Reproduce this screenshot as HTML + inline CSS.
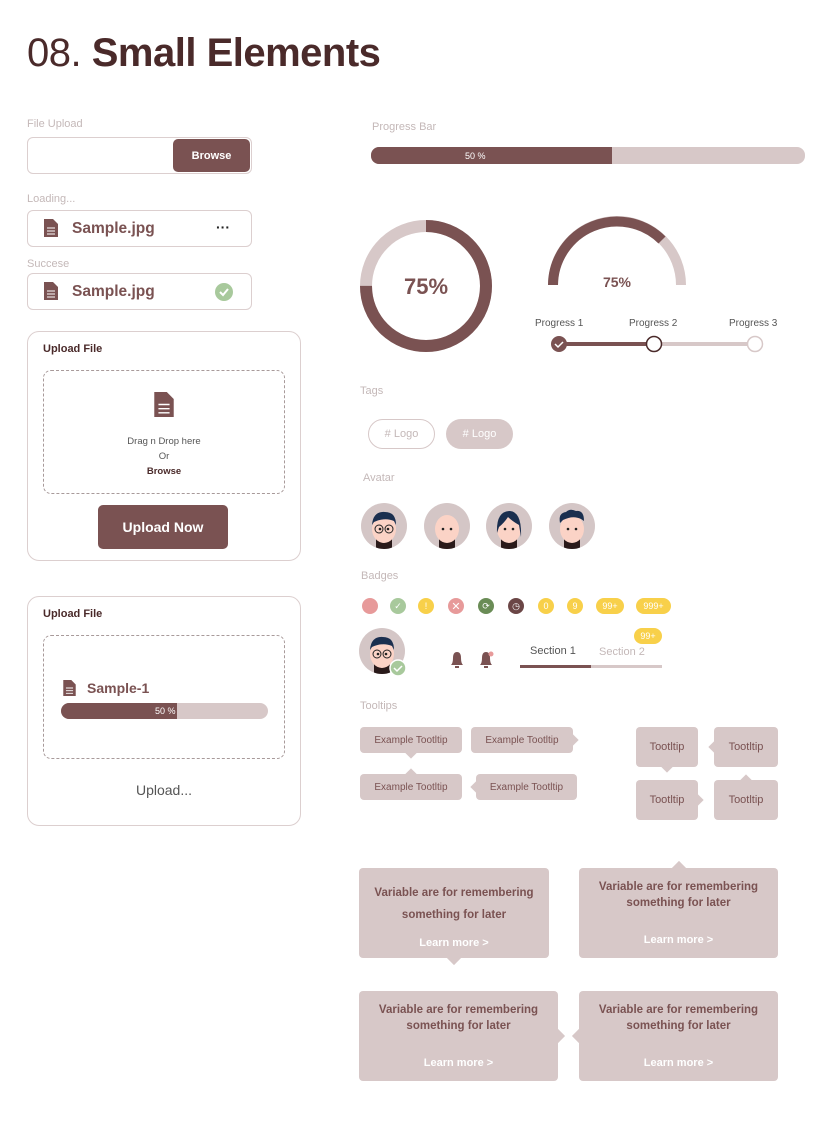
<!DOCTYPE html>
<html><head><meta charset="utf-8"><style>
*{box-sizing:border-box;margin:0;padding:0}
body{width:830px;height:1128px;background:#fff;font-family:"Liberation Sans",sans-serif;position:relative;overflow:hidden;color:#7a5252}
.a{position:absolute}
.lbl{position:absolute;font-size:11px;color:#c4b8b8}
.box{position:absolute;border:1.5px solid #dccfcf;border-radius:6px;background:#fff}
.fname{position:absolute;font-size:15.5px;font-weight:bold;color:#7a5252}
.card{position:absolute;border:1.5px solid #dccfcf;border-radius:12px}
.dash{position:absolute;border:1.2px dashed #a89a9a;border-radius:8px}
.tt{position:absolute;background:#d7c8c8;border-radius:4px;font-size:10px;color:#7a5252;display:flex;align-items:center;justify-content:center}
.tt i{position:absolute;width:8px;height:8px;background:#d7c8c8;transform:rotate(45deg)}
.big{position:absolute;background:#d7c8c8;border-radius:4px;color:#7a5252;font-size:11.5px;font-weight:bold;text-align:center;line-height:16px}
.big i{position:absolute;width:10px;height:10px;background:#d7c8c8;transform:rotate(45deg)}
.big b{position:absolute;left:0;right:0;color:#fff;font-size:11px}
.bd{position:absolute;top:598px;width:16px;height:16px;border-radius:8px;color:#fff;font-size:9px;display:flex;align-items:center;justify-content:center}
.pill{position:absolute;height:16px;border-radius:8px;background:#f8d04a;color:#fff;font-size:9px;display:flex;align-items:center;justify-content:center}
.av{position:absolute;width:46px;height:46px;border-radius:23px;background:#d4c6c6;overflow:hidden}
</style></head><body>
<div class="a" style="left:27px;top:31px;font-size:40px;color:#4a2a2a;letter-spacing:-0.5px"><span>08.</span> <b>Small Elements</b></div>

<div class="lbl" style="left:27px;top:118px">File Upload</div>
<div class="box" style="left:27px;top:137px;width:225px;height:37px"></div>
<div class="a" style="left:173px;top:139px;width:77px;height:33px;background:#7a5252;border-radius:5px;color:#fff;font-size:11px;font-weight:bold;display:flex;align-items:center;justify-content:center">Browse</div>

<div class="lbl" style="left:27px;top:193px">Loading...</div>
<div class="box" style="left:27px;top:210px;width:225px;height:37px"></div>
<svg class="a" style="left:44px;top:219px" width="14" height="18" viewBox="0 0 14 18"><path d="M0 0h9l5 5v13H0z" fill="#7a5252"/><path d="M3 9h8M3 12h8M3 15h8" stroke="#fff" stroke-width="1"/></svg>
<div class="fname" style="left:72px;top:220px">Sample.jpg</div>
<div class="a" style="left:216px;top:219px;font-size:14px;font-weight:bold;color:#222">···</div>

<div class="lbl" style="left:27px;top:258px">Succese</div>
<div class="box" style="left:27px;top:273px;width:225px;height:37px"></div>
<svg class="a" style="left:44px;top:282px" width="14" height="18" viewBox="0 0 14 18"><path d="M0 0h9l5 5v13H0z" fill="#7a5252"/><path d="M3 9h8M3 12h8M3 15h8" stroke="#fff" stroke-width="1"/></svg>
<div class="fname" style="left:72px;top:283px">Sample.jpg</div>
<svg class="a" style="left:215px;top:283px" width="18" height="18"><circle cx="9" cy="9" r="9" fill="#a8c99c"/><path d="M5 9l3 3 5-6" stroke="#fff" stroke-width="2" fill="none"/></svg>

<div class="card" style="left:27px;top:331px;width:274px;height:230px"></div>
<div class="a" style="left:43px;top:343px;font-size:11px;font-weight:bold;color:#4a2a2a">Upload File</div>
<div class="dash" style="left:43px;top:370px;width:242px;height:124px"></div>
<svg class="a" style="left:154px;top:392px" width="20" height="25" viewBox="0 0 14 18"><path d="M0 0h9l5 5v13H0z" fill="#7a5252"/><path d="M3 9h8M3 12h8M3 15h8" stroke="#fff" stroke-width="1"/></svg>
<div class="a" style="left:43px;width:242px;top:434px;text-align:center;font-size:9.5px;color:#555;line-height:15px">Drag n Drop here<br>Or<br><b style="color:#4a2a2a">Browse</b></div>
<div class="a" style="left:98px;top:505px;width:130px;height:44px;background:#7a5252;border-radius:5px;color:#fff;font-size:14px;font-weight:bold;display:flex;align-items:center;justify-content:center">Upload Now</div>

<div class="card" style="left:27px;top:596px;width:274px;height:230px"></div>
<div class="a" style="left:43px;top:608px;font-size:11px;font-weight:bold;color:#4a2a2a">Upload File</div>
<div class="dash" style="left:43px;top:635px;width:242px;height:124px"></div>
<svg class="a" style="left:63px;top:680px" width="13" height="16" viewBox="0 0 14 18"><path d="M0 0h9l5 5v13H0z" fill="#7a5252"/><path d="M3 9h8M3 12h8M3 15h8" stroke="#fff" stroke-width="1"/></svg>
<div class="fname" style="left:87px;top:680px;font-size:14px">Sample-1</div>
<div class="a" style="left:61px;top:703px;width:207px;height:16px;border-radius:8px;background:#d7c8c8;overflow:hidden"><div style="width:116px;height:16px;background:#7a5252"></div></div>
<div class="a" style="left:155px;top:706px;font-size:9px;color:#fff">50 %</div>
<div class="a" style="left:43px;width:242px;top:782px;text-align:center;font-size:14px;color:#555">Upload...</div>

<div class="lbl" style="left:372px;top:121px">Progress Bar</div>
<div class="a" style="left:371px;top:147px;width:434px;height:17px;border-radius:8px;background:#d7c8c8;overflow:hidden"><div style="width:241px;height:17px;background:#7a5252"></div></div>
<div class="a" style="left:465px;top:151px;font-size:9px;color:#fff">50 %</div>

<svg class="a" style="left:356px;top:216px" width="140" height="140">
<circle cx="70" cy="70" r="60" fill="none" stroke="#d7c8c8" stroke-width="12"/>
<circle cx="70" cy="70" r="60" fill="none" stroke="#7a5252" stroke-width="12" stroke-dasharray="282.7 377" transform="rotate(-90 70 70)"/>
<text x="70" y="78" text-anchor="middle" font-size="22" font-weight="bold" fill="#7a5252" font-family="Liberation Sans">75%</text></svg>
<svg class="a" style="left:547px;top:215px" width="140" height="75">
<path d="M6 70A64 64 0 0 1 134 70" fill="none" stroke="#d7c8c8" stroke-width="10"/>
<path d="M6 70A64 64 0 0 1 115 25" fill="none" stroke="#7a5252" stroke-width="10"/>
<text x="70" y="72" text-anchor="middle" font-size="14" font-weight="bold" fill="#7a5252" font-family="Liberation Sans">75%</text></svg>

<div class="a" style="left:535px;top:318px;font-size:10px;color:#555">Progress 1</div>
<div class="a" style="left:629px;top:318px;font-size:10px;color:#555">Progress 2</div>
<div class="a" style="left:729px;top:318px;font-size:10px;color:#555">Progress 3</div>
<div class="a" style="left:559px;top:342px;width:196px;height:4px;background:#d7c8c8"></div>
<div class="a" style="left:559px;top:342px;width:95px;height:4px;background:#7a5252"></div>
<svg class="a" style="left:550px;top:335px" width="215" height="18">
<circle cx="9" cy="9" r="8" fill="#7a5252"/><path d="M5 9l3 3 5-5" stroke="#fff" stroke-width="1.5" fill="none"/>
<circle cx="104" cy="9" r="7.5" fill="#fff" stroke="#4a2a2a" stroke-width="1.5"/>
<circle cx="205" cy="9" r="7.5" fill="#fff" stroke="#d7c8c8" stroke-width="1.5"/></svg>

<div class="lbl" style="left:360px;top:385px">Tags</div>
<div class="a" style="left:368px;top:419px;width:67px;height:30px;border:1.5px solid #d7c8c8;border-radius:15px;font-size:11px;color:#c4b8b8;display:flex;align-items:center;justify-content:center"># Logo</div>
<div class="a" style="left:446px;top:419px;width:67px;height:30px;background:#d7c8c8;border-radius:15px;font-size:11px;color:#fff;display:flex;align-items:center;justify-content:center"># Logo</div>

<div class="lbl" style="left:363px;top:472px">Avatar</div>
<svg width="0" height="0" style="position:absolute"><defs>
<g id="face"><rect x="15" y="36" width="16" height="12" fill="#2a1a1a"/><ellipse cx="23" cy="26" rx="12" ry="14" fill="#fbd3c6"/><circle cx="19" cy="26" r="1.3" fill="#222"/><circle cx="27" cy="26" r="1.3" fill="#222"/></g></defs></svg>
<div class="av" style="left:361px;top:503px"><svg width="46" height="46"><use href="#face"/><path d="M11 22Q12 8 24 9Q35 9 35 22L33 18Q24 14 13 19Z" fill="#1a2f4f"/><circle cx="18" cy="26" r="4" fill="none" stroke="#222"/><circle cx="28" cy="26" r="4" fill="none" stroke="#222"/></svg></div>
<div class="av" style="left:424px;top:503px"><svg width="46" height="46"><use href="#face"/></svg></div>
<div class="av" style="left:486px;top:503px"><svg width="46" height="46"><use href="#face"/><path d="M11 30Q10 8 24 8Q36 9 35 34L33 22Q26 18 22 14Q18 20 13 24Z" fill="#1a2f4f"/></svg></div>
<div class="av" style="left:549px;top:503px"><svg width="46" height="46"><use href="#face"/><path d="M11 20Q9 10 17 9Q21 5 27 8Q35 7 35 18L32 16Q24 12 14 17Z" fill="#1a2f4f"/></svg></div>

<div class="lbl" style="left:361px;top:570px">Badges</div>
<div class="bd" style="left:362px;background:#e79a9a"></div>
<div class="bd" style="left:390px;background:#a8c99c">✓</div>
<div class="bd" style="left:418px;background:#f8d04a">!</div>
<div class="bd" style="left:448px;background:#e79a9a;font-size:11px">✕</div>
<div class="bd" style="left:478px;background:#6a8c56">⟳</div>
<div class="bd" style="left:508px;background:#6b4646">◷</div>
<div class="bd" style="left:538px;background:#f8d04a">0</div>
<div class="bd" style="left:567px;background:#f8d04a">9</div>
<div class="pill" style="left:596px;top:598px;width:28px">99+</div>
<div class="pill" style="left:636px;top:598px;width:35px">999+</div>

<div class="av" style="left:359px;top:628px"><svg width="46" height="46"><use href="#face"/><path d="M11 22Q12 8 24 9Q35 9 35 22L33 18Q24 14 13 19Z" fill="#1a2f4f"/><circle cx="18" cy="26" r="4" fill="none" stroke="#222"/><circle cx="28" cy="26" r="4" fill="none" stroke="#222"/></svg></div>
<svg class="a" style="left:389px;top:659px" width="18" height="18"><circle cx="9" cy="9" r="8" fill="#a8c99c" stroke="#fff" stroke-width="1.5"/><path d="M5 9l3 3 5-5" stroke="#fff" stroke-width="1.5" fill="none"/></svg>
<svg class="a" style="left:448px;top:650px" width="48" height="20"><path d="M3 15Q5 13 5 8Q5 2 9 2Q13 2 13 8Q13 13 15 15Z M7 16h4v2h-4z" fill="#7a5252"/><path d="M32 15Q34 13 34 8Q34 2 38 2Q42 2 42 8Q42 13 44 15Z M36 16h4v2h-4z" fill="#7a5252"/><circle cx="43" cy="4" r="2.5" fill="#e79a9a"/></svg>
<div class="a" style="left:530px;top:645px;font-size:11px;color:#555">Section 1</div>
<div class="a" style="left:599px;top:646px;font-size:11px;color:#c4b8b8">Section 2</div>
<div class="pill" style="left:634px;top:628px;width:28px">99+</div>
<div class="a" style="left:520px;top:665px;width:142px;height:3px;background:#d7c8c8"></div>
<div class="a" style="left:520px;top:665px;width:71px;height:3px;background:#7a5252"></div>

<div class="lbl" style="left:360px;top:700px">Tooltips</div>
<div class="tt" style="left:360px;top:727px;width:102px;height:26px">Example Tootltip<i style="left:47px;bottom:-4px"></i></div>
<div class="tt" style="left:471px;top:727px;width:102px;height:26px">Example Tootltip<i style="right:-4px;top:9px"></i></div>
<div class="tt" style="left:360px;top:774px;width:102px;height:26px">Example Tootltip<i style="left:47px;top:-4px"></i></div>
<div class="tt" style="left:476px;top:774px;width:101px;height:26px">Example Tootltip<i style="left:-4px;top:9px"></i></div>
<div class="tt" style="left:636px;top:727px;width:62px;height:40px;font-size:11px">Tootltip<i style="left:27px;bottom:-4px"></i></div>
<div class="tt" style="left:714px;top:727px;width:64px;height:40px;font-size:11px">Tootltip<i style="left:-4px;top:16px"></i></div>
<div class="tt" style="left:636px;top:780px;width:62px;height:40px;font-size:11px">Tootltip<i style="right:-4px;top:16px"></i></div>
<div class="tt" style="left:714px;top:780px;width:64px;height:40px;font-size:11px">Tootltip<i style="left:28px;top:-4px"></i></div>

<div class="big" style="left:359px;top:868px;width:190px;height:90px;padding-top:14px;line-height:22px">Variable are for remembering<br>something for later<b style="top:64px">Learn more &gt;</b><i style="left:90px;bottom:-5px"></i></div>
<div class="big" style="left:579px;top:868px;width:199px;height:90px;padding-top:11px">Variable are for remembering<br>something for later<b style="top:64px">Learn more &gt;</b><i style="left:95px;top:-5px"></i></div>
<div class="big" style="left:359px;top:991px;width:199px;height:90px;padding-top:11px">Variable are for remembering<br>something for later<b style="top:64px">Learn more &gt;</b><i style="right:-5px;top:40px"></i></div>
<div class="big" style="left:579px;top:991px;width:199px;height:90px;padding-top:11px">Variable are for remembering<br>something for later<b style="top:64px">Learn more &gt;</b><i style="left:-5px;top:40px"></i></div>
</body></html>
